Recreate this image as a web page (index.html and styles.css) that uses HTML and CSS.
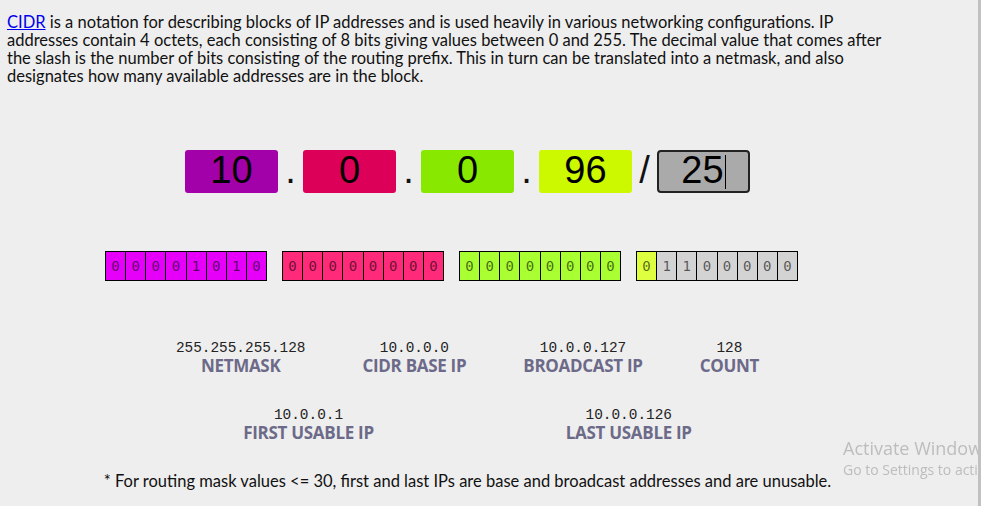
FILE: index.html
```html
<!DOCTYPE html>
<html lang="en">
<head>
    <meta charset="UTF-8">
    <meta name="viewport" content="width=device-width, initial-scale=1.0">
    <title>CIDR Calculator</title>
    <link rel="stylesheet" href="styles.css">
</head>
<body>
  <div class="page">
    <p class="intro">
      <a href="#">CIDR</a> is a notation for describing blocks of IP addresses and is used heavily in various networking configurations. IP addresses contain 4 octets, each consisting of 8 bits giving values between 0 and 255. The decimal value that comes after the slash is the number of bits consisting of the routing prefix. This in turn can be translated into a netmask, and also designates how many available addresses are in the block.
    </p>

    <div class="ip-row">
      <div class="octet octet-1">10</div>
      <span class="sep">.</span>
      <div class="octet octet-2">0</div>
      <span class="sep">.</span>
      <div class="octet octet-3">0</div>
      <span class="sep">.</span>
      <div class="octet octet-4">96</div>
      <span class="sep">/</span>
      <div class="octet mask">25<span class="caret"></span></div>
    </div>

    <div class="bits">
      <div class="bit-group group-1">
        <span>0</span><span>0</span><span>0</span><span>0</span><span>1</span><span>0</span><span>1</span><span>0</span>
      </div>
      <div class="bit-group group-2">
        <span>0</span><span>0</span><span>0</span><span>0</span><span>0</span><span>0</span><span>0</span><span>0</span>
      </div>
      <div class="bit-group group-3">
        <span>0</span><span>0</span><span>0</span><span>0</span><span>0</span><span>0</span><span>0</span><span>0</span>
      </div>
      <div class="bit-group group-4">
        <span class="net">0</span><span>1</span><span>1</span><span>0</span><span>0</span><span>0</span><span>0</span><span>0</span>
      </div>
    </div>

    <div class="results results-main">
      <div class="result">
        <div class="value">255.255.255.128</div>
        <div class="label">NETMASK</div>
      </div>
      <div class="result">
        <div class="value">10.0.0.0</div>
        <div class="label">CIDR BASE IP</div>
      </div>
      <div class="result">
        <div class="value">10.0.0.127</div>
        <div class="label">BROADCAST IP</div>
      </div>
      <div class="result">
        <div class="value">128</div>
        <div class="label">COUNT</div>
      </div>
    </div>

    <div class="results results-usable">
      <div class="result">
        <div class="value">10.0.0.1</div>
        <div class="label">FIRST USABLE IP</div>
      </div>
      <div class="result">
        <div class="value">10.0.0.126</div>
        <div class="label">LAST USABLE IP</div>
      </div>
    </div>

    <p class="note">* For routing mask values &lt;= 30, first and last IPs are base and broadcast addresses and are unusable.</p>
  </div>

  <div class="watermark">
    <div class="wm-title">Activate Windows</div>
    <div class="wm-sub">Go to Settings to activate Windows.</div>
  </div>
  <div class="scroll-edge"></div>
</body>
</html>
```

FILE: styles.css
```css
html, body {
    margin: 0;
    padding: 0;
    background: #eeeeee;
    height: 100%;
    overflow: hidden;
}
body {
    font-family: 'Lato', 'Noto Sans', sans-serif;
    color: #111;
}
.page {
    width: 921px;
    padding: 13px 0 0 7px;
}
.intro {
    margin: 0;
    max-width: 890px;
    font-size: 16.5px;
    line-height: 18px;
}
.intro a {
    color: #0000ee;
}

/* ip input row */
.ip-row {
    display: flex;
    justify-content: center;
    margin-top: 65px;
    font-family: 'Liberation Sans', Arial, sans-serif;
    font-size: 38px;
    line-height: 40px;
}
.octet {
    width: 93px;
    height: 43px;
    border-radius: 3px;
    text-align: center;
    color: #000;
    box-sizing: border-box;
}
.octet-1 { background: #a200a8; }
.octet-2 { background: #dc0058; }
.octet-3 { background: #88e800; }
.octet-4 { background: #ccf800; }
.mask {
    background: #aaaaaa;
    border: 2px solid #222;
    border-radius: 4px;
    line-height: 37px;
}
.caret {
    display: inline-block;
    width: 1px;
    height: 34px;
    background: #000;
    vertical-align: -6px;
    margin-left: 1px;
}
.sep {
    width: 25px;
    text-align: center;
}

/* binary row */
.bits {
    display: flex;
    gap: 15px;
    margin-top: 58px;
    padding-left: 98px;
}
.bit-group {
    display: flex;
    width: 162px;
    box-sizing: border-box;
    border: 1px solid #000;
    border-left: none;
}
.bit-group span {
    flex: 1;
    height: 28px;
    border-left: 1px solid #000;
    text-align: center;
    line-height: 28px;
    font-family: 'DejaVu Sans Mono', monospace;
    font-size: 14px;
    color: rgba(0, 0, 0, 0.6);
}
.group-1 span { background: #e600fa; }
.group-2 span { background: #ff2a7a; }
.group-3 span { background: #aaff33; }
.group-4 span { background: #d3d3d3; }
.group-4 span.net { background: #ddff40; }

/* results */
.results {
    display: flex;
    justify-content: center;
    text-align: center;
}
.results-main {
    margin-top: 59px;
    gap: 57px;
}
.results-usable {
    margin-top: 32px;
    gap: 192px;
}
.value {
    font-family: 'Liberation Mono', monospace;
    font-size: 14.4px;
    line-height: 16px;
    color: #222;
}
.label {
    font-family: 'Open Sans', sans-serif;
    font-weight: 700;
    font-size: 17px;
    line-height: 19px;
    color: #6c6a88;
    letter-spacing: -0.3px;
}
.note {
    margin: 30px 0 0;
    text-align: center;
    font-size: 16.5px;
    line-height: 18px;
}

/* windows overlay */
.watermark {
    position: fixed;
    left: 843px;
    top: 436px;
    width: 135px;
    overflow: hidden;
    white-space: nowrap;
    font-family: 'Open Sans', sans-serif;
    color: #bdbdbd;
}
.wm-title {
    font-size: 18px;
    line-height: 24px;
}
.wm-sub {
    font-size: 14px;
    line-height: 20px;
}
.scroll-edge {
    position: fixed;
    top: 0;
    right: 0;
    width: 3px;
    height: 100%;
    background: #c1c1c1;
}
```
